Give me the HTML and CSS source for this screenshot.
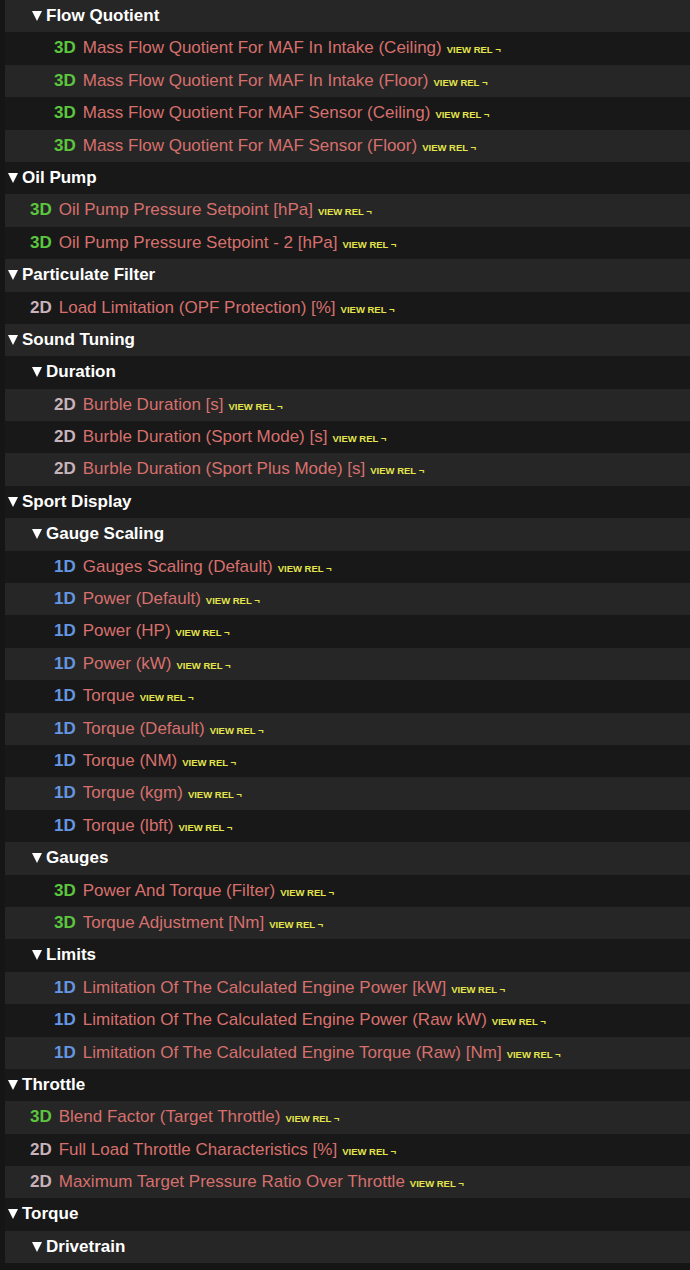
FILE: index.html
```html
<!DOCTYPE html>
<html lang="en">
<head>
  <meta charset="UTF-8" />
  <title>Map Tree</title>
  <link rel="stylesheet" href="styles.css">
</head>
<body>
  <div class="tree">
    <div class="row hdr d1"><span class="caret"></span>Flow Quotient</div>
    <div class="row item d2"><span class="dim d3">3D</span><span class="name">Mass Flow Quotient For MAF In Intake (Ceiling)</span><span class="rel">View rel ¬</span></div>
    <div class="row item d2"><span class="dim d3">3D</span><span class="name">Mass Flow Quotient For MAF In Intake (Floor)</span><span class="rel">View rel ¬</span></div>
    <div class="row item d2"><span class="dim d3">3D</span><span class="name">Mass Flow Quotient For MAF Sensor (Ceiling)</span><span class="rel">View rel ¬</span></div>
    <div class="row item d2"><span class="dim d3">3D</span><span class="name">Mass Flow Quotient For MAF Sensor (Floor)</span><span class="rel">View rel ¬</span></div>

    <div class="row hdr d0"><span class="caret"></span>Oil Pump</div>
    <div class="row item d1"><span class="dim d3">3D</span><span class="name">Oil Pump Pressure Setpoint [hPa]</span><span class="rel">View rel ¬</span></div>
    <div class="row item d1"><span class="dim d3">3D</span><span class="name">Oil Pump Pressure Setpoint - 2 [hPa]</span><span class="rel">View rel ¬</span></div>

    <div class="row hdr d0"><span class="caret"></span>Particulate Filter</div>
    <div class="row item d1"><span class="dim d2x">2D</span><span class="name">Load Limitation (OPF Protection) [%]</span><span class="rel">View rel ¬</span></div>

    <div class="row hdr d0"><span class="caret"></span>Sound Tuning</div>
    <div class="row hdr d1"><span class="caret"></span>Duration</div>
    <div class="row item d2"><span class="dim d2x">2D</span><span class="name">Burble Duration [s]</span><span class="rel">View rel ¬</span></div>
    <div class="row item d2"><span class="dim d2x">2D</span><span class="name">Burble Duration (Sport Mode) [s]</span><span class="rel">View rel ¬</span></div>
    <div class="row item d2"><span class="dim d2x">2D</span><span class="name">Burble Duration (Sport Plus Mode) [s]</span><span class="rel">View rel ¬</span></div>

    <div class="row hdr d0"><span class="caret"></span>Sport Display</div>
    <div class="row hdr d1"><span class="caret"></span>Gauge Scaling</div>
    <div class="row item d2"><span class="dim d1x">1D</span><span class="name">Gauges Scaling (Default)</span><span class="rel">View rel ¬</span></div>
    <div class="row item d2"><span class="dim d1x">1D</span><span class="name">Power (Default)</span><span class="rel">View rel ¬</span></div>
    <div class="row item d2"><span class="dim d1x">1D</span><span class="name">Power (HP)</span><span class="rel">View rel ¬</span></div>
    <div class="row item d2"><span class="dim d1x">1D</span><span class="name">Power (kW)</span><span class="rel">View rel ¬</span></div>
    <div class="row item d2"><span class="dim d1x">1D</span><span class="name">Torque</span><span class="rel">View rel ¬</span></div>
    <div class="row item d2"><span class="dim d1x">1D</span><span class="name">Torque (Default)</span><span class="rel">View rel ¬</span></div>
    <div class="row item d2"><span class="dim d1x">1D</span><span class="name">Torque (NM)</span><span class="rel">View rel ¬</span></div>
    <div class="row item d2"><span class="dim d1x">1D</span><span class="name">Torque (kgm)</span><span class="rel">View rel ¬</span></div>
    <div class="row item d2"><span class="dim d1x">1D</span><span class="name">Torque (lbft)</span><span class="rel">View rel ¬</span></div>
    <div class="row hdr d1"><span class="caret"></span>Gauges</div>
    <div class="row item d2"><span class="dim d3">3D</span><span class="name">Power And Torque (Filter)</span><span class="rel">View rel ¬</span></div>
    <div class="row item d2"><span class="dim d3">3D</span><span class="name">Torque Adjustment [Nm]</span><span class="rel">View rel ¬</span></div>
    <div class="row hdr d1"><span class="caret"></span>Limits</div>
    <div class="row item d2"><span class="dim d1x">1D</span><span class="name">Limitation Of The Calculated Engine Power [kW]</span><span class="rel">View rel ¬</span></div>
    <div class="row item d2"><span class="dim d1x">1D</span><span class="name">Limitation Of The Calculated Engine Power (Raw kW)</span><span class="rel">View rel ¬</span></div>
    <div class="row item d2"><span class="dim d1x">1D</span><span class="name">Limitation Of The Calculated Engine Torque (Raw) [Nm]</span><span class="rel">View rel ¬</span></div>

    <div class="row hdr d0"><span class="caret"></span>Throttle</div>
    <div class="row item d1"><span class="dim d3">3D</span><span class="name">Blend Factor (Target Throttle)</span><span class="rel">View rel ¬</span></div>
    <div class="row item d1"><span class="dim d2x">2D</span><span class="name">Full Load Throttle Characteristics [%]</span><span class="rel">View rel ¬</span></div>
    <div class="row item d1"><span class="dim d2x">2D</span><span class="name">Maximum Target Pressure Ratio Over Throttle</span><span class="rel">View rel ¬</span></div>

    <div class="row hdr d0"><span class="caret"></span>Torque</div>
    <div class="row hdr d1"><span class="caret"></span>Drivetrain</div>
  </div>
</body>
</html>
```

FILE: styles.css
```css
body {
  margin: 0;
  background: #151515;
  font-family: "Liberation Sans", Arial, sans-serif;
  font-size: 17px;
}
.tree {
  padding-left: 5px;
}
.row {
  display: flex;
  align-items: baseline;
  height: 32.4px;
  line-height: 32.4px;
  white-space: nowrap;
  background: #181818;
}
.row:nth-child(odd) {
  background: #262626;
}
.hdr {
  color: #fff;
  font-weight: bold;
}
/* down-pointing triangle, bottom sits on the text baseline */
.caret {
  display: inline-block;
  width: 0;
  height: 0;
  border-left: 5px solid transparent;
  border-right: 5px solid transparent;
  border-top: 10px solid #fff;
  margin-right: 4px;
}
.hdr.d0 { padding-left: 3px; }
.hdr.d1 { padding-left: 27px; }
.item.d1 { padding-left: 25px; }
.item.d2 { padding-left: 49px; }
.dim {
  font-weight: bold;
  margin-right: 7px;
}
.dim.d3 { color: #5cc63e; }
.dim.d2x { color: #c8b3bb; }
.dim.d1x { color: #6596e2; }
.name {
  color: #d7706d;
}
.rel {
  color: #e5e64c;
  font-size: 9.5px;
  font-weight: bold;
  text-transform: uppercase;
  margin-left: 5px;
}
```
